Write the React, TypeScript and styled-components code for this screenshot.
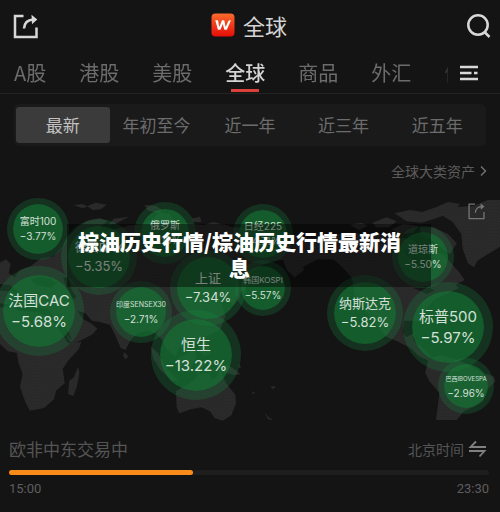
import React from "react";
import styled, { createGlobalStyle, css } from "styled-components";

const GlobalStyle = createGlobalStyle`
  * { box-sizing: border-box; }
  body {
    margin: 0;
    background: #141414;
    color: #d6d6d6;
    font-family: Inter, "Noto Sans CJK SC", sans-serif;
  }
  button, a { font: inherit; color: inherit; text-decoration: none; }
  button { background: none; border: 0; padding: 0; cursor: pointer; }
  svg { display: block; }
`;

const cjk = css`
  font-family: "Noto Sans CJK SC", sans-serif;
`;

const Page = styled.main`
  background: #141414;
  overflow: hidden;
`;

const Header = styled.header`
  display: grid;
  grid-template-columns: 1fr auto 1fr;
  align-items: center;
  height: 52px;
  padding: 0 8px 0 12px;
`;

const IconButton = styled.button<{ $end?: boolean }>`
  justify-self: ${(p) => (p.$end ? "end" : "start")};
  color: #d8d8d8;
`;

const Brand = styled.h1`
  ${cjk}
  display: flex;
  align-items: center;
  gap: 8px;
  margin: 0;
  padding: 0 6px 2px 0;
  font-size: 22px;
  line-height: 28px;
  font-weight: 400;
  color: #d4d4d4;
`;

const TabBar = styled.nav`
  display: flex;
  align-items: center;
  height: 42px;
  padding: 0 21px 0 14px;
  border-bottom: 1px solid #232323;
`;

const TabList = styled.div`
  ${cjk}
  display: flex;
  flex: 1;
  gap: 33px;
  min-width: 0;
  height: 41px;
  overflow: hidden;
  font-size: 20px;
  line-height: 42px;
  mask-image: linear-gradient(to left, rgba(0, 0, 0, 0.3), #000 12px);
`;

const Tab = styled.button<{ $active?: boolean }>`
  display: flex;
  flex: none;
  flex-direction: column;
  align-items: center;
  color: ${(p) => (p.$active ? "#d4d4d4" : "#6c6c6c")};
  font-weight: ${(p) => (p.$active ? 500 : 400)};
  height: 41px;

  &::after {
    content: "";
    flex: none;
    width: 28px;
    height: 3px;
    margin-top: -5px;
    background: ${(p) => (p.$active ? "#d9413a" : "transparent")};
  }
`;

const MenuButton = styled.button`
  margin-left: 11px;
  color: #d8d8d8;
`;

const Periods = styled.div`
  ${cjk}
  display: grid;
  grid-template-columns: repeat(5, 1fr);
  margin: 10px 14px 0;
  padding: 3px 2px;
  border-radius: 5px;
  background: #1a1a1a;
`;

const Period = styled.button<{ $active?: boolean }>`
  height: 36px;
  border-radius: 3px;
  font-size: 17px;
  line-height: 34px;
  white-space: nowrap;
  color: ${(p) => (p.$active ? "#c2c2c2" : "#6c6c6c")};
  background: ${(p) => (p.$active ? "#3b3b3b" : "transparent")};
`;

const LinkRow = styled.div`
  ${cjk}
  display: flex;
  justify-content: flex-end;
  height: 44px;
  padding: 13px 12px 0 0;
`;

const AssetsLink = styled.a`
  display: flex;
  align-items: center;
  gap: 4px;
  height: 24px;
  font-size: 14px;
  color: #5c5c5c;
`;

const MapArea = styled.section`
  position: relative;
  height: 240px;
`;

const MapDrawing = styled.svg`
  width: 100%;
  height: 240px;
`;

const MapShare = styled.button`
  position: absolute;
  top: 12px;
  right: 15px;
  color: #747474;
`;

type Size = "s" | "m" | "l";

const rows: Record<Size, { line: number; value: number }> = {
  s: { line: 15, value: 10 },
  m: { line: 19, value: 13 },
  l: { line: 21, value: 15 },
};

const Bubble = styled.div<{ $x: number; $y: number; $r: number; $ring: number }>`
  position: absolute;
  left: ${(p) => p.$x / 5}%;
  top: ${(p) => p.$y}px;
  width: ${(p) => p.$r * 2}px;
  height: ${(p) => p.$r * 2}px;
  transform: translate(-50%, -50%);
  border-radius: 50%;
  background: rgba(21, 122, 56, 0.7);
  box-shadow: 0 0 0 ${(p) => p.$ring}px rgba(24, 140, 64, 0.26);
  display: flex;
  flex-direction: column;
  align-items: center;
  justify-content: center;
  white-space: nowrap;
`;

const BubbleName = styled.span<{ $size: Size; $font: number }>`
  font-size: ${(p) => p.$font}px;
  line-height: ${(p) => rows[p.$size].line}px;
  color: #d3e0d7;
`;

const BubbleValue = styled.span<{ $size: Size }>`
  font-size: ${(p) => rows[p.$size].value}px;
  line-height: ${(p) => rows[p.$size].line}px;
  color: #d3e0d7;
`;

const Caption = styled.h2`
  ${cjk}
  position: absolute;
  top: 34px;
  left: 67px;
  right: 69px;
  min-height: 63px;
  margin: 0;
  padding: 4px 28px 7px 9px;
  background: rgba(0, 0, 0, 0.42);
  color: #fff;
  font-size: 21px;
  line-height: 26px;
  font-weight: 900;
  text-align: center;
`;

const Session = styled.footer`
  padding: 6px 11px 12px 9px;
`;

const SessionHead = styled.div`
  ${cjk}
  display: flex;
  align-items: center;
  justify-content: space-between;
  height: 25px;
  padding-right: 2px;
  color: #555;
`;

const SessionName = styled.span`
  font-size: 17px;
`;

const TimeZone = styled.button`
  display: flex;
  align-items: center;
  gap: 4px;
  font-size: 14px;
`;

const Track = styled.div`
  height: 5px;
  margin-top: 9px;
  border-radius: 3px;
  background: #1e1e1e;
`;

const Fill = styled.div`
  height: 5px;
  border-radius: 3px;
  background: #f98b1b;
`;

const Times = styled.div`
  display: flex;
  justify-content: space-between;
  margin-top: 5px;
  font-family: Roboto, sans-serif;
  font-size: 13px;
  line-height: 17px;
  color: #5e5e5e;
`;

function ShareIcon({ size, stroke }: { size: number; stroke: number }) {
  return (
    <svg width={size} height={size} viewBox="0 0 26 26" fill="none" stroke="currentColor" strokeWidth={stroke}>
      <path d="M11.500 3H3V24H24.500V14.500" />
      <path d="M12 15.500C12.400 10.300 15.500 7 21 6.600" />
      <path d="M19.500 1.800L25.300 6.400L20 11.200Z" fill="currentColor" stroke="none" />
    </svg>
  );
}

function Logo() {
  return (
    <svg width="24" height="24" viewBox="0 0 24 24">
      <defs>
        <linearGradient id="logo" x1="0" y1="0" x2="0" y2="1">
          <stop offset="0" stopColor="#fb6a2c" />
          <stop offset="1" stopColor="#e50d08" />
        </linearGradient>
      </defs>
      <rect x="0.500" y="0.500" width="23" height="23" rx="4" fill="url(#logo)" />
      <path
        d="M4.300 7.300H7L8.300 14L11 7.300H13.200L14.700 14L17.100 8.600C17.500 7.600 18.300 7.300 20 7.300L15.800 16.800H13.300L11.800 11L9.400 16.800H6.900Z"
        fill="#fff"
      />
    </svg>
  );
}

function WorldMap() {
  return (
    <MapDrawing viewBox="0 0 1500 720" preserveAspectRatio="none" aria-hidden="true">
      <defs>
        <pattern id="weave" width="9" height="9" patternUnits="userSpaceOnUse">
          <rect width="9" height="9" fill="#272727" />
          <path d="M0 0L9 9M9 0L0 9" stroke="#2e2e2e" strokeWidth="1.500" />
        </pattern>
      </defs>
      <g fill="url(#weave)">
        <path d="M0 218L18 208L32 222L26 250L44 262L60 240L92 228L122 206L160 200L190 168L204 140L232 112L262 92L300 84L322 94L300 112L312 126L350 116L390 106L420 104L450 92L480 68L508 72L522 92L560 100L610 106L640 96L700 112L760 118L850 124L900 140L960 146L1010 166L1034 178L1000 188L966 186L936 202L900 210L912 240L884 262L860 240L850 210L810 214L780 230L750 250L742 284L724 302L716 330L700 346L684 328L664 340L676 378L660 420L622 438L596 446L578 470L560 484L538 470L526 500L500 476L486 448L466 430L440 420L414 430L392 450L376 480L362 474L346 436L330 404L300 396L276 392L256 370L232 362L250 388L276 402L292 416L276 434L240 452L216 462L198 436L176 400L158 384L150 360L110 352L80 350L58 338L34 344L0 340Z" />
        <path d="M0 352L30 350L54 362L110 366L154 384L176 416L204 460L244 456L236 478L206 510L188 536L194 580L168 602L162 628L132 654L90 662L76 636L60 590L68 552L56 520L50 488L24 484L0 462Z" />
        <path d="M204 612L208 572L222 562L234 530L238 550L230 592L220 618Z" />
        <path d="M372 486L384 498L378 508L370 500Z" />
        <path d="M452 470L474 490L502 538L534 570L518 572L482 540L460 506Z" />
        <path d="M530 506L556 494L580 474L590 500L570 544L540 542Z" />
        <path d="M598 462L622 456L632 488L614 500L598 482ZM596 510L624 514L606 536L592 560ZM652 518L684 526L722 552L704 556L670 546Z" />
        <path d="M528 604L574 576L600 552L628 550L636 572L652 558L660 536L678 580L706 614L708 640L694 676L668 692L644 684L630 664L604 652L572 658L538 670L530 652Z" />
        <path d="M794 668L806 682L820 690L804 688ZM756 604L766 610L758 611ZM812 590L824 588L826 594L816 596ZM690 530L710 542L698 546ZM716 522L724 532L717 534Z" />
        <path d="M222 46L248 42L264 50L246 54ZM262 48L288 38L320 44L302 58L278 60ZM434 44L468 48L490 62L474 70L442 60ZM324 106L342 86L386 80L350 100ZM574 86L600 80L604 96L582 96Z" />
        <path d="M700 336L712 312L738 296L750 262L738 254L724 278L708 302ZM738 208L746 222L742 250L732 236Z" />
        <path d="M860 214L900 196L940 176L980 148L1018 132L1072 130L1110 138L1164 132L1200 144L1242 150L1260 174L1230 190L1240 218L1266 234L1296 210L1300 182L1330 194L1352 218L1380 250L1394 270L1366 284L1376 294L1340 312L1302 330L1278 358L1262 396L1244 392L1212 392L1208 426L1218 442L1242 430L1240 452L1266 472L1294 500L1290 514L1256 498L1232 474L1196 456L1156 438L1118 388L1086 350L1064 316L1056 264L1026 230L1000 208L952 208L914 228L886 250L902 226Z" />
        <path d="M1118 98L1160 82L1190 94L1166 112L1128 112ZM1184 70L1230 60L1266 66L1308 52L1344 36L1380 42L1360 66L1304 86L1264 98L1220 94ZM1176 118L1210 102L1254 108L1240 128L1200 132ZM1260 112L1300 112L1344 132L1370 160L1350 192L1322 172L1290 146L1262 136ZM1050 104L1086 98L1102 108L1076 120Z" />
        <path d="M1310 66L1360 52L1420 48L1464 30L1500 30V170L1464 192L1432 212L1422 232L1404 220L1388 176L1384 132L1358 96Z" />
        <path d="M1286 504L1324 496L1364 508L1410 526L1440 546L1482 560L1486 574L1458 602L1450 632L1420 650L1392 664L1370 690H1308L1314 644L1318 608L1288 574L1276 548Z" />
      </g>
      <g fill="#171717">
        <path d="M92 270L112 260L150 264L170 280L154 294L110 286ZM190 264L206 260L214 298L230 322L216 328L200 294ZM170 372L180 380L206 426L216 450L196 432L178 396ZM30 286L56 306L78 326L62 330L36 304L0 302V282Z" />
        <path d="M1210 178L1246 174L1264 198L1248 214L1222 200ZM1240 294L1280 288L1304 302L1280 312Z" />
      </g>
    </MapDrawing>
  );
}

interface Market {
  name: string;
  value: string;
  x: number;
  y: number;
  r: number;
  ring: number;
  size: Size;
  font: number;
}

const markets: Market[] = [
  { name: "富时100", value: "−3.77%", x: 38, y: 39, r: 25, ring: 6, size: "s", font: 10 },
  { name: "德国DAX", value: "−5.35%", x: 99, y: 67, r: 31, ring: 7, size: "m", font: 12 },
  { name: "俄罗斯", value: "−1.19%", x: 165, y: 43, r: 24, ring: 7, size: "s", font: 10 },
  { name: "日经225", value: "−4.71%", x: 263, y: 44, r: 24, ring: 6, size: "s", font: 10 },
  { name: "上证", value: "−7.34%", x: 208, y: 98, r: 31, ring: 7, size: "m", font: 13 },
  { name: "韩国KOSPI", value: "−5.57%", x: 263, y: 98, r: 22, ring: 6, size: "s", font: 8 },
  { name: "法国CAC", value: "−5.68%", x: 39, y: 121, r: 36, ring: 9, size: "l", font: 15 },
  { name: "印度SENSEX30", value: "−2.71%", x: 141, y: 122, r: 25, ring: 6, size: "s", font: 7 },
  { name: "恒生", value: "−13.22%", x: 196, y: 165, r: 36, ring: 9, size: "l", font: 15 },
  { name: "道琼斯", value: "−5.50%", x: 423, y: 67, r: 25, ring: 6, size: "s", font: 10 },
  { name: "纳斯达克", value: "−5.82%", x: 365, y: 123, r: 31, ring: 7, size: "m", font: 13 },
  { name: "标普500", value: "−5.97%", x: 448, y: 137, r: 36, ring: 9, size: "l", font: 15 },
  { name: "巴西IBOVESPA", value: "−2.96%", x: 466, y: 196, r: 22, ring: 6, size: "s", font: 6 },
];

const tabs = ["A股", "港股", "美股", "全球", "商品", "外汇", "债券"];
const periods = ["最新", "年初至今", "近一年", "近三年", "近五年"];

export default function App() {
  return (
    <Page>
      <GlobalStyle />
      <Header>
        <IconButton aria-label="分享">
          <ShareIcon size={26} stroke={2.5} />
        </IconButton>
        <Brand>
          <Logo />
          全球
        </Brand>
        <IconButton $end aria-label="搜索">
          <svg width="26" height="26" viewBox="0 0 26 26" fill="none" stroke="currentColor" strokeWidth="2.500">
            <circle cx="12" cy="12" r="9.700" />
            <path d="M18 18.500L23.500 24" />
          </svg>
        </IconButton>
      </Header>
      <TabBar>
        <TabList>
          {tabs.map((t) => (
            <Tab key={t} $active={t === "全球"}>
              {t}
            </Tab>
          ))}
        </TabList>
        <MenuButton aria-label="更多">
          <svg width="20" height="18" viewBox="0 0 20 18" fill="none" stroke="currentColor" strokeWidth="2.600">
            <path d="M1 3H19M1 9H12.500M15 9H18.500M1 15H19" />
          </svg>
        </MenuButton>
      </TabBar>
      <Periods>
        {periods.map((p) => (
          <Period key={p} $active={p === "最新"}>
            {p}
          </Period>
        ))}
      </Periods>
      <LinkRow>
        <AssetsLink href="#assets">
          全球大类资产
          <svg width="9" height="12" viewBox="0 0 9 12" fill="none" stroke="#777" strokeWidth="1.300">
            <path d="M2 1.500L6.500 6L2 10.500" />
          </svg>
        </AssetsLink>
      </LinkRow>
      <MapArea>
        <WorldMap />
        {markets.map((m) => (
          <Bubble key={m.name} $x={m.x} $y={m.y} $r={m.r} $ring={m.ring}>
            <BubbleName $size={m.size} $font={m.font}>
              {m.name}
            </BubbleName>
            <BubbleValue $size={m.size}>{m.value}</BubbleValue>
          </Bubble>
        ))}
        <MapShare aria-label="分享地图">
          <ShareIcon size={18} stroke={1.9} />
        </MapShare>
        <Caption>棕油历史行情/棕油历史行情最新消息</Caption>
      </MapArea>
      <Session>
        <SessionHead>
          <SessionName>欧非中东交易中</SessionName>
          <TimeZone>
            北京时间
            <svg width="19" height="18" viewBox="0 0 19 18" fill="none" stroke="#808080" strokeWidth="1.800">
              <path d="M18 7H2.500L8 1.500M1 11H16.500L11.500 16.500" />
            </svg>
          </TimeZone>
        </SessionHead>
        <Track>
          <Fill style={{ width: "38.3%" }} />
        </Track>
        <Times>
          <span>15:00</span>
          <span>23:30</span>
        </Times>
      </Session>
    </Page>
  );
}
